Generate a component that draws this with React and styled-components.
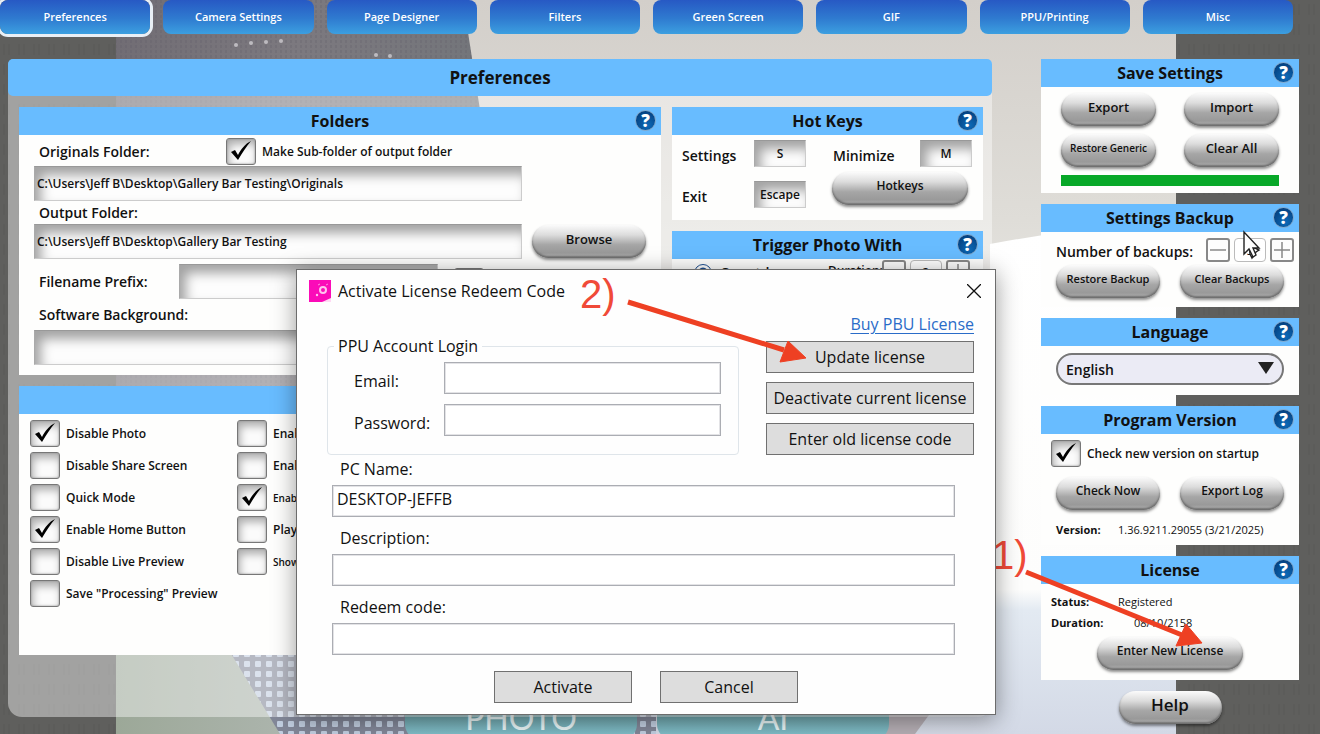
import React, { useState } from "react";
import styled, { createGlobalStyle, css } from "styled-components";

const tabs = [
  "Preferences",
  "Camera Settings",
  "Page Designer",
  "Filters",
  "Green Screen",
  "GIF",
  "PPU/Printing",
  "Misc",
];

const options = [
  { label: "Disable Photo", checked: true },
  { label: "Disable Share Screen" },
  { label: "Quick Mode" },
  { label: "Enable Home Button", checked: true },
  { label: "Disable Live Preview" },
  { label: 'Save "Processing" Preview' },
];

const moreOptions = [
  { id: "filters", label: "Enable" },
  { id: "green-screen", label: "Enable" },
  { id: "layouts", label: "Enable", checked: true, small: true },
  { id: "sounds", label: "Play" },
  { id: "countdown", label: "Show", small: true },
];

function Card({ title, children }) {
  return (
    <CardBox>
      <CardHeader>
        <CardTitle>{title}</CardTitle>
        <HelpIcon type="button" aria-label={`Help: ${title}`}>
          ?
        </HelpIcon>
      </CardHeader>
      {children}
    </CardBox>
  );
}

function CheckBox({ label, checked = false, size = 12 }) {
  const [isChecked, setIsChecked] = useState(checked);
  return (
    <CheckLabel $size={size}>
      <CheckFrame>
        <CheckInput
          type="checkbox"
          checked={isChecked}
          onChange={() => setIsChecked(!isChecked)}
        />
        {isChecked && (
          <CheckMark viewBox="0 0 30 27" aria-hidden="true">
            <path d="M5 14 L9 12 L12 17 C15 11 19 6 25 3 C20 9 16 15 12 22 Z" />
          </CheckMark>
        )}
      </CheckFrame>
      {label}
    </CheckLabel>
  );
}

function Stepper({ id, value }) {
  const [count, setCount] = useState(value);
  return (
    <StepperRow>
      <StepButton
        type="button"
        aria-label="Decrease"
        onClick={() => setCount(count - 1)}
      >
        <svg width="16" height="16" viewBox="0 0 16 16">
          <path d="M0 8H16" />
        </svg>
      </StepButton>
      <StepValue
        id={id}
        value={count}
        onChange={(e) => setCount(Number(e.target.value) || 0)}
      />
      <StepButton
        type="button"
        aria-label="Increase"
        onClick={() => setCount(count + 1)}
      >
        <svg width="16" height="16" viewBox="0 0 16 16">
          <path d="M0 8H16M8 0V16" />
        </svg>
      </StepButton>
    </StepperRow>
  );
}

// blurred event photo behind the whole settings screen
function PhotoBackdrop() {
  return (
    <Backdrop viewBox="0 0 1320 734" preserveAspectRatio="none" aria-hidden="true">
      <defs>
        <linearGradient id="wall" x1="0" y1="0" x2="0" y2="1">
          <stop offset="0" stopColor="#d3cfca" />
          <stop offset="0.3" stopColor="#dfddd8" />
          <stop offset="0.55" stopColor="#eeeeec" />
          <stop offset="1" stopColor="#d5dae6" />
        </linearGradient>
        <linearGradient id="floor" x1="0" y1="0" x2="1" y2="0">
          <stop offset="0" stopColor="#9ca898" />
          <stop offset="1" stopColor="#b7bdbb" />
        </linearGradient>
        <linearGradient id="jacket" x1="0" y1="0" x2="1" y2="0">
          <stop offset="0" stopColor="#716d74" />
          <stop offset="0.5" stopColor="#7c797f" />
          <stop offset="1" stopColor="#73757a" />
        </linearGradient>
        <linearGradient id="light" x1="0" y1="0" x2="0" y2="1">
          <stop offset="0" stopColor="#ffffff" />
          <stop offset="0.72" stopColor="#fdfdfc" />
          <stop offset="0.76" stopColor="#e3eaf2" />
          <stop offset="1" stopColor="#d3d9e6" />
        </linearGradient>
        <pattern id="mesh" width="15" height="20" patternUnits="userSpaceOnUse">
          <rect width="15" height="20" fill="#5f5f5d" />
          <path d="M4 4V15M9 4V15" stroke="#585856" strokeWidth="1" />
        </pattern>
        <pattern id="weave" width="11" height="10" patternUnits="userSpaceOnUse">
          <rect width="11" height="10" fill="#828798" />
          <rect x="2" y="1" width="6" height="6" rx="1" fill="#c1cee0" />
        </pattern>
        <pattern id="denim" width="5" height="5" patternUnits="userSpaceOnUse">
          <rect width="2" height="3" fill="#5f5d66" opacity="0.25" />
        </pattern>
      </defs>
      <rect width="1320" height="734" fill="url(#mesh)" />
      <rect x="116" width="1060" height="734" fill="url(#wall)" />
      <path d="M116 0H463L480 110L400 734H116Z" fill="url(#jacket)" />
      <path d="M116 0H463L480 110L400 734H116Z" fill="url(#denim)" />
      <path d="M116 400H330L400 734H116Z" fill="url(#floor)" />
      <path d="M230 652H400L410 734H280Z" fill="url(#weave)" />
      <path d="M990 244Q1090 226 1176 218V734H990Z" fill="url(#light)" />
      <path d="M634 700H656V734H630Z" fill="url(#weave)" />
      <path d="M888 700H940L915 734H885Z" fill="#b5aeb4" />
      <g fill="#dcdade" opacity="0.7">
        <circle cx="236" cy="45" r="2" />
        <circle cx="251" cy="43" r="2" />
        <circle cx="266" cy="42" r="2" />
        <circle cx="281" cy="41" r="2" />
        <circle cx="376" cy="55" r="2" />
        <circle cx="390" cy="56" r="2" />
      </g>
    </Backdrop>
  );
}

function LicenseDialog() {
  const [pcName, setPcName] = useState("DESKTOP-JEFFB");
  return (
    <Dialog role="dialog" aria-labelledby="dialog-title">
      <DialogBar>
        <svg width="22" height="22" viewBox="0 0 22 22" aria-hidden="true">
          <rect width="22" height="22" fill="#fb0bb8" />
          <circle cx="14" cy="10" r="3" fill="none" stroke="#ffc4ee" strokeWidth="2" />
          <circle cx="8" cy="15" r="1.2" fill="#ffc4ee" />
          <path d="M9 5L11 4M17 5L19 4" stroke="#ff8fdf" />
          <path d="M13 22L22 18V22Z" fill="#ffd9f4" />
        </svg>
        <DialogTitle id="dialog-title">Activate License Redeem Code</DialogTitle>
        <CloseButton type="button" aria-label="Close">
          <svg width="14" height="14" viewBox="0 0 14 14">
            <path d="M0 0L14 14M14 0L0 14" stroke="#111" strokeWidth="1.3" />
          </svg>
        </CloseButton>
      </DialogBar>
      <DialogTop>
        <AccountBox>
          <AccountLegend>PPU Account Login</AccountLegend>
          <AccountLabel htmlFor="email">Email:</AccountLabel>
          <DialogInput id="email" type="email" />
          <AccountLabel htmlFor="password">Password:</AccountLabel>
          <DialogInput id="password" type="password" />
        </AccountBox>
        <LicenseActions>
          <BuyLink href="#buy">Buy PBU License</BuyLink>
          <DialogButton type="button">Update license</DialogButton>
          <DialogButton type="button">Deactivate current license</DialogButton>
          <DialogButton type="button">Enter old license code</DialogButton>
        </LicenseActions>
      </DialogTop>
      <DialogFields>
        <DialogLabel htmlFor="pc-name">PC Name:</DialogLabel>
        <DialogInput
          id="pc-name"
          value={pcName}
          onChange={(e) => setPcName(e.target.value)}
        />
        <DialogLabel htmlFor="description">Description:</DialogLabel>
        <DialogInput id="description" />
        <DialogLabel htmlFor="redeem">Redeem code:</DialogLabel>
        <DialogInput id="redeem" />
      </DialogFields>
      <DialogFooter>
        <DialogButton type="button">Activate</DialogButton>
        <DialogButton type="button">Cancel</DialogButton>
      </DialogFooter>
    </Dialog>
  );
}

function App() {
  const [activeTab, setActiveTab] = useState("Preferences");

  return (
    <Screen>
      <GlobalStyle />
      <PhotoBackdrop />
      <ModeBar>
        <ModeButton type="button">PHOTO</ModeButton>
        <ModeButton type="button">AI</ModeButton>
      </ModeBar>

      <TabBar>
        {tabs.map((tab) => (
          <Tab
            key={tab}
            type="button"
            $active={tab === activeTab}
            onClick={() => setActiveTab(tab)}
          >
            {tab}
          </Tab>
        ))}
      </TabBar>

      <Content>
        <MainPanel>
          <PanelTitle>Preferences</PanelTitle>
          <PanelGrid>
            <Column>
              <Card title="Folders">
                <FoldersBody>
                  <FolderRow>
                    <FieldLabel htmlFor="originals">Originals Folder:</FieldLabel>
                    <CheckBox label="Make Sub-folder of output folder" checked />
                  </FolderRow>
                  <PathInput
                    id="originals"
                    defaultValue="C:\Users\Jeff B\Desktop\Gallery Bar Testing\Originals"
                  />
                  <FieldLabel htmlFor="output">Output Folder:</FieldLabel>
                  <OutputRow>
                    <PathInput
                      id="output"
                      defaultValue="C:\Users\Jeff B\Desktop\Gallery Bar Testing"
                    />
                    <PillButton type="button" $size={13}>
                      Browse
                    </PillButton>
                  </OutputRow>
                  <PrefixRow>
                    <FieldLabel htmlFor="prefix">Filename Prefix:</FieldLabel>
                    <PathInput id="prefix" />
                    <CheckBox label="" />
                  </PrefixRow>
                  <FieldLabel htmlFor="background" $tall>
                    Software Background:
                  </FieldLabel>
                  <PathInput id="background" />
                </FoldersBody>
              </Card>
              <Card title="Options">
                <OptionsBody>
                  <OptionList>
                    {options.map(({ label, checked }) => (
                      <CheckBox key={label} label={label} checked={checked} />
                    ))}
                  </OptionList>
                  <OptionList>
                    {moreOptions.map(({ id, label, checked, small }) => (
                      <CheckBox
                        key={id}
                        label={label}
                        checked={checked}
                        size={small ? 10 : 12}
                      />
                    ))}
                  </OptionList>
                </OptionsBody>
              </Card>
            </Column>
            <Column>
              <Card title="Hot Keys">
                <HotKeysBody>
                  <KeyLabel htmlFor="key-settings">Settings</KeyLabel>
                  <KeyInput id="key-settings" defaultValue="S" />
                  <KeyLabel htmlFor="key-minimize" $indent>
                    Minimize
                  </KeyLabel>
                  <KeyInput id="key-minimize" defaultValue="M" />
                  <KeyLabel htmlFor="key-exit">Exit</KeyLabel>
                  <KeyInput id="key-exit" defaultValue="Escape" />
                  <HotkeysButton type="button" $size={12}>
                    Hotkeys
                  </HotkeysButton>
                </HotKeysBody>
              </Card>
              <Card title="Trigger Photo With">
                <TriggerBody>
                  <TriggerLabel>
                    <Radio type="radio" name="trigger" defaultChecked />
                    Countdown
                  </TriggerLabel>
                  <DurationLabel htmlFor="duration">Duration:</DurationLabel>
                  <Stepper id="duration" value={3} />
                </TriggerBody>
              </Card>
            </Column>
          </PanelGrid>
        </MainPanel>

        <Sidebar>
          <Card title="Save Settings">
            <SaveBody>
              <PillButton type="button">Export</PillButton>
              <PillButton type="button">Import</PillButton>
              <PillButton type="button" $size={10}>
                Restore Generic
              </PillButton>
              <PillButton type="button">Clear All</PillButton>
              <SaveProgress />
            </SaveBody>
          </Card>
          <Card title="Settings Backup">
            <BackupBody>
              <BackupRow>
                <label htmlFor="backups">Number of backups:</label>
                <Stepper id="backups" value={5} />
              </BackupRow>
              <ButtonPair>
                <PillButton type="button" $size={11}>
                  Restore Backup
                </PillButton>
                <PillButton type="button" $size={11}>
                  Clear Backups
                </PillButton>
              </ButtonPair>
            </BackupBody>
          </Card>
          <Card title="Language">
            <LanguageBody>
              <LanguageSelect aria-label="Language" defaultValue="English">
                <option>English</option>
                <option>Spanish</option>
              </LanguageSelect>
              <SelectArrow width="16" height="12" viewBox="0 0 16 12" aria-hidden="true">
                <path d="M0 0H16L8 12Z" fill="#222" />
              </SelectArrow>
            </LanguageBody>
          </Card>
          <Card title="Program Version">
            <VersionBody>
              <CheckBox label="Check new version on startup" checked />
              <ButtonPair $indent>
                <PillButton type="button" $size={12}>
                  Check Now
                </PillButton>
                <PillButton type="button" $size={12}>
                  Export Log
                </PillButton>
              </ButtonPair>
              <InfoRow $indent>
                <dt>Version:</dt>
                <dd>1.36.9211.29055 (3/21/2025)</dd>
              </InfoRow>
            </VersionBody>
          </Card>
          <Card title="License">
            <LicenseBody>
              <InfoRow>
                <dt>Status:</dt>
                <dd>Registered</dd>
              </InfoRow>
              <InfoRow $inset>
                <dt>Duration:</dt>
                <dd>08/10/2158</dd>
              </InfoRow>
              <LicenseButton type="button" $size={12}>
                Enter New License
              </LicenseButton>
            </LicenseBody>
          </Card>
          <HelpButton type="button">Help</HelpButton>
        </Sidebar>
      </Content>

      <StepNote $left={992} $top={532}>
        1)
      </StepNote>
      <LicenseDialog />
      <StepNote $left={580} $top={271}>
        2)
      </StepNote>
      <Markup width="1320" height="734" viewBox="0 0 1320 734" aria-hidden="true">
        <g stroke="#ee4023" strokeWidth="5" fill="#ee4023">
          <path d="M628 302L784 350" />
          <path d="M788 341L806 358L780 362Z" strokeWidth="1" />
          <path d="M1026 572L1182 635" />
          <path d="M1186 624L1202 643L1176 646Z" strokeWidth="1" />
        </g>
        <g stroke="#222" strokeWidth="1.4" fill="#fff">
          <path d="M1249 245L1259 250L1256 252L1252 258L1250 254Z" />
          <path d="M1244 232V254L1249 249L1253 257L1256 255L1253 248H1259Z" />
        </g>
      </Markup>
    </Screen>
  );
}

export default App;

const GlobalStyle = createGlobalStyle`
  * {
    box-sizing: border-box;
  }
  body {
    margin: 0;
    font-family: "Open Sans", "Noto Sans", sans-serif;
    color: #111;
  }
  button, input, select {
    font-family: inherit;
    color: inherit;
  }
`;

const Screen = styled.div`
  position: relative;
  min-height: 100vh;
  overflow: hidden;
`;

const Backdrop = styled.svg`
  position: absolute;
  inset: 0;
  width: 100%;
  height: 100%;
`;

const ModeBar = styled.div`
  position: absolute;
  left: 405px;
  bottom: -6px;
  display: flex;
  gap: 20px;
`;

const ModeButton = styled.button`
  width: 232px;
  height: 60px;
  padding: 16px 0 0;
  border: 0;
  border-radius: 16px;
  background: linear-gradient(#6fa5ab 60%, #84c4d0);
  color: #e8f5f6;
  font-family: Lato, sans-serif;
  font-weight: 400;
  font-size: 32px;
  line-height: 24px;
`;

const TabBar = styled.nav`
  position: relative;
  display: flex;
  gap: 13px;
  padding-right: 27px;
`;

const Tab = styled.button`
  flex: 1;
  height: 34px;
  padding: 0 0 2px;
  border: 0;
  border-radius: 8px;
  background: linear-gradient(#2759c4, #2f7bd0 55%, #3c9fe0);
  color: #fff;
  font-size: 11px;
  font-weight: 600;
  ${({ $active }) =>
    $active &&
    css`
      box-shadow: 0 0 0 3px #e9eff5;
    `}
`;

const Content = styled.main`
  position: relative;
  display: flex;
  gap: 49px;
  padding: 25px 21px 8px 8px;
`;

const MainPanel = styled.section`
  flex: 1;
  min-width: 0;
  height: 658px;
  border-radius: 6px 6px 14px 14px;
  background: rgba(255, 255, 255, 0.42);
`;

const PanelTitle = styled.h1`
  margin: 0;
  border-radius: 5px;
  background: #68bcff;
  font-size: 17px;
  font-weight: 700;
  line-height: 37px;
  text-align: center;
`;

const PanelGrid = styled.div`
  display: grid;
  grid-template-columns: 1fr 311px;
  gap: 11px;
  padding: 11px 9px 11px 11px;
`;

const Column = styled.div`
  display: flex;
  flex-direction: column;
  gap: 11px;
`;

const Sidebar = styled.aside`
  width: 258px;
  display: flex;
  flex-direction: column;
  gap: 11px;
`;

const CardBox = styled.section`
  background: #fefefd;
`;

const CardHeader = styled.header`
  position: relative;
  height: 28px;
  background: #68bcff;
`;

const CardTitle = styled.h2`
  margin: 0;
  font-size: 16px;
  font-weight: 700;
  line-height: 29px;
  text-align: center;
`;

const HelpIcon = styled.button`
  position: absolute;
  top: 3px;
  right: 5px;
  width: 21px;
  height: 21px;
  padding: 0;
  border: 1px solid #83a7c8;
  border-radius: 50%;
  background: radial-gradient(circle at 60% 75%, #0d6ab8, #064a8d 60%, #03366f);
  color: #fff;
  font-size: 17px;
  font-weight: 800;
  line-height: 18px;
`;

const sunken = css`
  border: 1px solid #ccc;
  border-top-color: #999;
  border-left-color: #aaa;
  background: #fdfdfd;
  box-shadow: inset 6px 8px 12px rgba(0, 0, 0, 0.36);
`;

const PathInput = styled.input`
  ${sunken}
  width: 488px;
  height: 35px;
  padding: 0 2px;
  font-size: 12px;
  font-weight: 600;
`;

const FieldLabel = styled.label`
  display: block;
  padding-left: 5px;
  font-size: 14px;
  font-weight: 600;
  line-height: ${({ $tall }) => ($tall ? "31px" : "23px")};
`;

const CheckLabel = styled.label`
  display: flex;
  align-items: center;
  gap: 6px;
  font-size: ${({ $size }) => $size}px;
  font-weight: 600;
  white-space: nowrap;
`;

const CheckFrame = styled.span`
  position: relative;
  width: 30px;
  height: 27px;
`;

const CheckInput = styled.input`
  appearance: none;
  width: 30px;
  height: 27px;
  margin: 0;
  display: block;
  border: 1px solid #777;
  border-radius: 3px;
  background: #fbfbfb;
  box-shadow:
    inset 0 0 2px #888,
    inset 2px 5px 9px rgba(0, 0, 0, 0.32);
`;

const CheckMark = styled.svg`
  position: absolute;
  inset: 0;
  pointer-events: none;
`;

const pillText = css`
  color: #111;
  font-weight: 600;
  white-space: nowrap;
`;

const PillButton = styled.button`
  ${pillText}
  height: 33px;
  padding: 0 0 6px;
  border: 0;
  border-radius: 17px;
  background: linear-gradient(#fbfbfb, #dcdcdc 30%, #a6a6a6 60%, #999 85%, #c0c0c0);
  box-shadow:
    inset 0 -2px 2px #6c6c6c,
    0 2px 3px rgba(0, 0, 0, 0.45);
  font-size: ${({ $size }) => $size || 13}px;
`;

const FoldersBody = styled.div`
  padding: 3px 15px 10px;
`;

const FolderRow = styled.div`
  display: grid;
  grid-template-columns: 192px 1fr;
  align-items: center;
  padding-bottom: 1px;
`;

const OutputRow = styled.div`
  display: grid;
  grid-template-columns: 488px 114px;
  gap: 10px;
  align-items: center;
`;

const PrefixRow = styled.div`
  display: grid;
  grid-template-columns: 129px 259px 30px;
  gap: 16px;
  align-items: center;
  padding-top: 5px;

  ${PathInput} {
    width: 259px;
  }
`;

const OptionsBody = styled.div`
  display: grid;
  grid-template-columns: 207px 1fr;
  height: 241px;
  padding: 6px 11px;
`;

const OptionList = styled.div`
  display: flex;
  flex-direction: column;
  gap: 5px;
`;

const HotKeysBody = styled.div`
  display: grid;
  grid-template-columns: 72px 52px 114px 52px;
  grid-template-rows: 27px 27px;
  align-items: center;
  row-gap: 14px;
  height: 85px;
  padding: 5px 10px;
`;

const KeyLabel = styled.label`
  padding: 4px 0 0 ${({ $indent }) => ($indent ? "27px" : "0")};
  font-size: 14px;
  font-weight: 600;
`;

const KeyInput = styled.input`
  ${sunken}
  width: 52px;
  height: 27px;
  padding: 0;
  font-size: 12px;
  font-weight: 600;
  text-align: center;
`;

const HotkeysButton = styled(PillButton)`
  grid-column: 3 / 5;
  align-self: end;
  width: 136px;
  margin: 0 0 3px 26px;
`;

const TriggerBody = styled.div`
  display: grid;
  grid-template-columns: 134px 54px 1fr;
  align-items: start;
  height: 120px;
  padding: 1px 11px 0 22px;
  font-size: 14px;
  font-weight: 600;
`;

const TriggerLabel = styled.label`
  display: flex;
  align-items: center;
  gap: 8px;
  padding-top: 3px;
`;

const Radio = styled.input`
  width: 18px;
  height: 18px;
  margin: 0;
  accent-color: #1d4f91;
`;

const DurationLabel = styled.label`
  font-size: 12px;
  line-height: 22px;
`;

const StepperRow = styled.div`
  display: flex;
  gap: 4px;
`;

const StepButton = styled.button`
  width: 24px;
  height: 24px;
  padding: 2px;
  border: 2px solid #888;
  border-radius: 3px;
  background: #fdfdfd;

  svg {
    display: block;
    stroke: #888;
    stroke-width: 1.5;
  }
`;

const StepValue = styled.input`
  width: 32px;
  height: 24px;
  padding: 0;
  border: 1px solid #bbb;
  border-radius: 4px;
  background: #fff;
  font-size: 12px;
  text-align: center;
`;

const SaveBody = styled.div`
  display: grid;
  grid-template-columns: 95px 95px;
  justify-content: space-between;
  row-gap: 8px;
  padding: 6px 20px 7px;
`;

const SaveProgress = styled.div`
  grid-column: 1 / 3;
  height: 11px;
  background: #08a828;
`;

const BackupBody = styled.div`
  padding: 5px 5px 9px 15px;
`;

const BackupRow = styled.div`
  display: flex;
  align-items: center;
  justify-content: space-between;
  font-size: 14px;
  font-weight: 600;

  label {
    padding-top: 4px;
    line-height: 22px;
    white-space: nowrap;
  }
`;

const ButtonPair = styled.div`
  display: grid;
  grid-template-columns: 104px 104px;
  gap: 20px;
  padding: ${({ $indent }) => ($indent ? "10px 5px 9px" : "2px 0 0")};
`;

const LanguageBody = styled.div`
  position: relative;
  padding: 7px 15px 10px;
`;

const LanguageSelect = styled.select`
  appearance: none;
  display: block;
  width: 100%;
  height: 32px;
  padding: 0 8px;
  border: 2px solid #777;
  border-radius: 16px;
  background: #ebebf5;
  font-size: 14px;
  font-weight: 600;
`;

const SelectArrow = styled.svg`
  position: absolute;
  top: 16px;
  right: 25px;
  pointer-events: none;
`;

const VersionBody = styled.div`
  padding: 6px 10px 5px;
`;

const InfoRow = styled.dl`
  display: grid;
  grid-template-columns: ${({ $indent }) => ($indent ? "62px" : "67px")} 1fr;
  margin: 0;
  padding-left: ${({ $indent }) => ($indent ? "5px" : "0")};
  font-size: 11px;
  line-height: 21px;

  dt {
    font-weight: 700;
  }
  dd {
    margin: 0;
    padding-left: ${({ $inset }) => ($inset ? "16px" : "0")};
    font-weight: 500;
    white-space: nowrap;
  }
`;

const LicenseBody = styled.div`
  display: flex;
  flex-direction: column;
  padding: 7px 10px 10px;
`;

const LicenseButton = styled(PillButton)`
  align-self: center;
  width: 146px;
  margin-top: 4px;
`;

const HelpButton = styled(PillButton)`
  align-self: center;
  width: 103px;
  font-size: 17px;
`;

const Dialog = styled.div`
  position: absolute;
  left: 296px;
  top: 269px;
  width: 700px;
  border: 1px solid #6c6c6c;
  background: #fefefe;
  box-shadow: 0 4px 22px rgba(0, 0, 0, 0.4);
  font-size: 16px;
`;

const DialogBar = styled.header`
  display: flex;
  align-items: center;
  gap: 7px;
  height: 42px;
  padding: 0 14px 0 12px;
`;

const DialogTitle = styled.h2`
  flex: 1;
  margin: 0;
  font-size: 16px;
  font-weight: 400;
`;

const CloseButton = styled.button`
  padding: 0;
  border: 0;
  background: none;

  svg {
    display: block;
  }
`;

const DialogTop = styled.div`
  display: grid;
  grid-template-columns: 412px 208px;
  gap: 27px;
  align-items: end;
  padding: 1px 21px 0 30px;
`;

const AccountBox = styled.fieldset`
  display: grid;
  grid-template-columns: 90px 277px;
  row-gap: 10px;
  align-items: center;
  margin: 0;
  padding: 5px 17px 18px 26px;
  border: 1px solid #dfe5ea;
  border-radius: 4px;
`;

const AccountLegend = styled.legend`
  margin-left: -20px;
  padding: 0 4px;
  line-height: 22px;
`;

const AccountLabel = styled.label`
  padding-top: 6px;
`;

const DialogInput = styled.input`
  width: 100%;
  height: 32px;
  padding: 0 4px 4px;
  border: 1px solid #abadb3;
  outline: 1px solid #e3e3e6;
  outline-offset: -2px;
  background: #fff;
  font-size: 16px;
`;

const LicenseActions = styled.div`
  display: grid;
  gap: 9px;
`;

const BuyLink = styled.a`
  justify-self: end;
  margin-bottom: -3px;
  color: #2a6cc8;
  line-height: 22px;
  text-underline-offset: 3px;
`;

const DialogButton = styled.button`
  height: 32px;
  padding: 0;
  border: 1px solid #707070;
  background: #dddddd;
  font-size: 16px;
  white-space: nowrap;
`;

const DialogFields = styled.div`
  padding: 0 40px 0 35px;
`;

const DialogLabel = styled.label`
  display: block;
  padding: 3px 8px 5px;
  line-height: 22px;

  ${DialogInput} + & {
    padding: 10px 8px 5px;
  }
`;

const DialogFooter = styled.footer`
  display: grid;
  grid-template-columns: 138px 138px;
  justify-content: center;
  gap: 28px;
  padding: 16px 0 11px;
`;

const StepNote = styled.span`
  position: absolute;
  left: ${({ $left }) => $left}px;
  top: ${({ $top }) => $top}px;
  color: #f04a38;
  font-family: "Liberation Sans", Arial, sans-serif;
  font-size: 40px;
  line-height: 46px;
`;

const Markup = styled.svg`
  position: absolute;
  left: 0;
  top: 0;
  pointer-events: none;
`;
